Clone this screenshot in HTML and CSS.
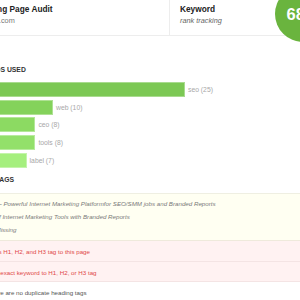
FILE: index.html
```html
<!DOCTYPE html>
<html>
<head>
<meta charset="utf-8">
<link rel="stylesheet" href="styles.css">
</head>
<body>
<div class="page">
  <div class="header">
    <div class="hcol hcol-main">
      <div class="htitle">Landing Page Audit</div>
      <div class="hsub">domain.com</div>
    </div>
    <div class="hcol">
      <div class="htitle">Keyword</div>
      <div class="hsub hsub-i">rank tracking</div>
    </div>
  </div>
  <div class="score">68%</div>

  <div class="section-title kw">Keywords used</div>
  <div class="bars">
    <div class="bar-row"><div class="bar b1" style="width:220px"></div><span class="bar-label">seo (25)</span></div>
    <div class="bar-row"><div class="bar b2" style="width:88px"></div><span class="bar-label">web (10)</span></div>
    <div class="bar-row"><div class="bar b3" style="width:70.4px"></div><span class="bar-label">ceo (8)</span></div>
    <div class="bar-row"><div class="bar b4" style="width:70.4px"></div><span class="bar-label">tools (8)</span></div>
    <div class="bar-row"><div class="bar b5" style="width:61.6px"></div><span class="bar-label">label (7)</span></div>
  </div>

  <div class="section-title tags">Header tags</div>
  <div class="table">
    <div class="warn">
      <div class="line"><span class="tag">H1</span><span>— Powerful Internet Marketing Platformfor SEO/SMM jobs and Branded Reports</span></div>
      <div class="line"><span class="tag">H2</span><span>of Internet Marketing Tools with Branded Reports</span></div>
      <div class="line"><span class="tag">H3</span><span>Missing</span></div>
    </div>
    <div class="msg err"><span class="ico">✖</span><span>Adds H1, H2, and H3 tag to this page</span></div>
    <div class="msg err"><span class="ico">✖</span><span>Add exact keyword to H1, H2, or H3 tag</span></div>
    <div class="msg ok"><span class="ico">✔</span><span>There are no duplicate heading tags</span></div>
  </div>
</div>
</body>
</html>
```

FILE: styles.css
```css
body {
  margin: 0;
  overflow: hidden;
  background: #fff;
  font-family: "Liberation Sans", Arial, sans-serif;
}

.page {
  position: relative;
  margin-left: -35px;
  width: 345px;
}

.header {
  display: flex;
  border-bottom: 1px solid #ededed;
}

.hcol {
  padding: 4px 10px 9px;
}

.hcol-main {
  width: 205px;
  box-sizing: border-box;
  border-right: 1px solid #ededed;
}

.htitle {
  font-weight: bold;
  font-size: 8.3px;
  line-height: 11px;
  color: #222;
  white-space: nowrap;
}

.hsub {
  font-size: 7.3px;
  line-height: 11px;
  color: #777;
  white-space: nowrap;
}

.hsub-i {
  font-style: italic;
  color: #666;
}

.score {
  position: absolute;
  left: 310px;
  top: -14px;
  width: 56px;
  height: 56px;
  border-radius: 50%;
  background: #6ab43e;
  color: #fff;
  font-weight: bold;
  font-size: 16.5px;
  line-height: 56px;
  text-align: center;
}

.section-title {
  font-weight: bold;
  font-size: 6.8px;
  line-height: 10px;
  text-transform: uppercase;
  color: #333;
  white-space: nowrap;
}

.kw {
  margin-top: 29px;
}

.bars {
  margin-top: 7px;
  display: flex;
  flex-direction: column;
  gap: 2.7px;
}

.bar-row {
  display: flex;
  align-items: center;
  height: 15px;
}

.bar {
  height: 15px;
  box-sizing: border-box;
  border: 1px solid rgba(255, 255, 255, 0.35);
}

.b1 { background: #7cc854; }
.b2 { background: #84d25b; }
.b3 { background: #8cda62; }
.b4 { background: #93e06a; }
.b5 { background: #a5ef7e; }

.bar-label {
  margin-left: 3px;
  font-size: 6.8px;
  color: #a8a8a8;
  white-space: nowrap;
}

.tags {
  margin-top: 7px;
}

.table {
  margin-top: 8px;
  border-top: 1px solid #efefe2;
}

.warn {
  background: #fffff2;
  padding: 3.5px 0 3.7px 10px;
  border-bottom: 1px solid #efeadc;
}

.line {
  display: flex;
  font-size: 6.2px;
  line-height: 13px;
  color: #7a7a7a;
  font-style: italic;
  white-space: nowrap;
}

.tag {
  width: 20.5px;
  flex: none;
  font-style: normal;
  font-weight: bold;
  color: #555;
}

.msg {
  display: flex;
  padding: 5px 0 2.7px 10px;
  border-bottom: 1px solid #eee;
  font-size: 6.2px;
  line-height: 12px;
  white-space: nowrap;
}

.msg.err {
  background: #fff2f2;
  color: #e04848;
  border-color: #f4e4e4;
}

.msg.ok {
  color: #555;
}

.ico {
  width: 12.5px;
  flex: none;
}
```
